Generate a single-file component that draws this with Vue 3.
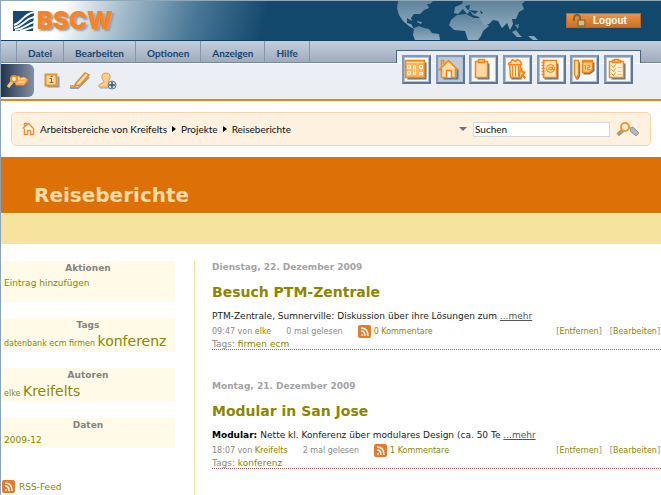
<script setup>
const menus = ['Datei', 'Bearbeiten', 'Optionen', 'Anzeigen', 'Hilfe']
const crumbs = ['Arbeitsbereiche von Kreifelts', 'Projekte', 'Reiseberichte']
const shortcuts = [
  { id: 'portal', label: 'Portal' },
  { id: 'home', label: 'Home', active: true },
  { id: 'clipboard', label: 'Zwischenablage' },
  { id: 'trash', label: 'Papierkorb' },
  { id: 'address', label: 'Adressbuch' },
  { id: 'calendar', label: 'Kalender' },
  { id: 'tasks', label: 'Aufgaben' }
]
const posts = [
  {
    date: 'Dienstag, 22. Dezember 2009',
    title: 'Besuch PTM-Zentrale',
    lead: '',
    text: 'PTM-Zentrale, Sumnerville: Diskussion über ihre Lösungen zum',
    time: '09:47',
    author: 'elke',
    reads: '0 mal gelesen',
    comments: '0 Kommentare',
    tags: ['firmen', 'ecm']
  },
  {
    date: 'Montag, 21. Dezember 2009',
    title: 'Modular in San Jose',
    lead: 'Modular:',
    text: 'Nette kl. Konferenz über modulares Design (ca. 50 Te',
    time: '18:07',
    author: 'Kreifelts',
    reads: '2 mal gelesen',
    comments: '1 Kommentare',
    tags: ['konferenz']
  }
]
</script>

<template>
  <div class="page">
    <header>
      <div class="banner">
        <a class="logo" href="#" aria-label="BSCW">
          <svg width="21" height="20" viewBox="0 0 21 20">
            <path d="M0 0H21L20 20H0Z" fill="#174a6e" />
            <path d="M1 14C9 12 9 4 21 1M1 17C11 15 11 8 21 6M2 19C12 18 13 13 21 11M7 20C14 19 15 17 21 16" fill="none" stroke="#fff" stroke-width="2" />
          </svg>
          <span>BSCW</span>
        </a>
        <svg class="map" width="150" height="39" viewBox="395 1 150 39" aria-hidden="true">
          <defs>
            <linearGradient id="land" x1="0" y1="1" x2="0" y2="0">
              <stop offset="0" stop-color="#8fabbd" />
              <stop offset="1" stop-color="#5f839c" />
            </linearGradient>
          </defs>
          <g fill="url(#land)">
            <path d="M399 1H434L431 4L428 4L430 8L425 10L421 14L415 14L412 18L413 21L408 18L408 23L412 24L415 29L410 26L404 21L400 15L398 8Z" />
            <path d="M415 28L420 26L425 28L430 29L433 33L440 34L441 40H416L414 35Z" />
            <path d="M418 21L423 22L422 24L418 22Z" />
            <path d="M452 20L458 15L467 14L475 18L482 18L490 26L484 31L482 36L479 40H469L466 31L455 30L450 25Z" />
            <path d="M455 13L456 7L463 4L464 1H526L523 4L525 9L520 12L517 19L513 19L514 24L511 30L508 23L503 28L499 21L494 20L490 24L485 25L480 17L474 15L471 11L468 14L464 9L459 14Z" />
            <path d="M513 32L517 30L520 34L523 37L518 37ZM529 36L535 36L539 40H534ZM516 25L520 24L519 29Z" />
          </g>
          <path d="M466 6L471 5L470 10L479 11L476 14L468 9ZM481 10L484 13L482 14Z" fill="#13486d" />
        </svg>
        <button class="logout" type="button">
          <svg width="16" height="13" viewBox="0 0 16 13">
            <path d="M2 7V4Q2 1 5 1T8 4V7" fill="none" stroke="#87603f" stroke-width="2" />
            <path d="M6 6H13V12H6Z" fill="#d9a14c" stroke="#6b6655" />
            <path d="M7 8H12M7 10H12" stroke="#f4cd7e" />
          </svg>
          Logout
        </button>
      </div>
      <nav class="menu">
        <button v-for="m in menus" :key="m" type="button">{{ m }}</button>
      </nav>
      <div class="toolbar">
        <div class="tools">
          <button class="tool current" type="button" aria-label="Ordner öffnen">
            <svg width="22" height="18" viewBox="0 0 22 18">
              <path d="M7 5L12 4L13 6L17 5L20 7L21 8L17 13L9 13Z" fill="#ffd9a2" stroke="#ee8a24" />
              <path d="M10 10L12 8H20L17 12H10Z" fill="#ffc880" stroke="#f49b3d" />
              <circle cx="7" cy="7" r="3" fill="#fff3dd" stroke="#f28d26" stroke-width="2" />
              <path d="M5 10L1 15" stroke="#ffc680" stroke-width="3" />
            </svg>
          </button>
          <button class="tool" type="button" aria-label="Information">
            <svg width="16" height="16" viewBox="0.5 0.5 16 16">
              <path d="M4 14H15V4" fill="none" stroke="#8b9aae" stroke-width="2" />
              <path d="M2 2H13V13H2Z" fill="#ffdca6" stroke="#e59130" stroke-width="2" />
              <path d="M6 6H8V10M6 10H10M7 4H9" fill="none" stroke="#9c5c12" />
            </svg>
          </button>
          <button class="tool" type="button" aria-label="Bearbeiten">
            <svg width="22" height="18" viewBox="0 0 22 18">
              <path d="M1 16H9L20 5" fill="none" stroke="#92a0b2" stroke-width="2" />
              <path d="M7 11L16 1L20 3L11 13L6 14Z" fill="#ffd295" stroke="#e78a24" stroke-width="1.500" />
              <path d="M9 12L18 2" stroke="#fff2da" />
              <path d="M1 14H5L7 12" fill="none" stroke="#e78a24" stroke-width="1.500" />
            </svg>
          </button>
          <button class="tool" type="button" aria-label="Mitglied einladen">
            <svg width="20" height="18" viewBox="0 0 20 18">
              <path d="M6 10Q3 6 4 3Q5 1 8 1T12 3Q13 6 10 10L13 12V15H1V13Z" fill="#ffcd8c" stroke="#ea9a47" />
              <path d="M2 16H12" stroke="#9aa6b6" />
              <circle cx="14" cy="13" r="4" fill="#d8e2ec" stroke="#5d7893" />
              <path d="M11 13H17M14 10V16" stroke="#2e5576" stroke-width="1.500" />
            </svg>
          </button>
        </div>
        <div class="shortcuts">
          <button v-for="s in shortcuts" :key="s.id" type="button" :aria-label="s.label" :class="{ active: s.active }">
            <svg width="23" height="23" viewBox="0.5 0.5 23 23" fill="none" stroke="#f5860f" stroke-width="1.500">
              <template v-if="s.id === 'portal'">
                <path d="M4 21H22V5" stroke="#5f7694" stroke-width="2" />
                <path d="M2 3H21V20H2Z" fill="#ffb557" />
                <path d="M3 5H20" stroke="#ffe0b0" stroke-width="1" />
                <path d="M4 8H7V11H4ZM4 14H7V17H4ZM10 8H12V17H10ZM16 8H19V11H16ZM16 15H19V17H16Z" fill="#ffc477" stroke="#fff5e6" stroke-width="1" />
              </template>
              <template v-else-if="s.id === 'home'">
                <path d="M6 21H20V12" stroke="#5f7694" stroke-width="2" />
                <path d="M2 12L11 3L20 12H18V20H14V13H9V20H4V12Z" fill="#ffdba6" />
                <path d="M4 9V3H6V7" fill="#ffdba6" />
                <path d="M10 14H13V20H10Z" fill="#f4f6fa" stroke="none" />
              </template>
              <template v-else-if="s.id === 'clipboard'">
                <path d="M7 21H18V6" stroke="#5f7694" stroke-width="2" />
                <path d="M5 4H17V20H5Z" fill="#ffd9a5" />
                <path d="M8 5V2H14V5Z" fill="#ffc477" />
              </template>
              <template v-else-if="s.id === 'trash'">
                <path d="M7 21H17" stroke="#5f7694" stroke-width="2" />
                <path d="M5 7H16L15 20H6Z" fill="#ffe2ba" />
                <path d="M8 8V19M11 8V19M14 8V19" stroke-width="1" />
                <path d="M4 7Q4 5 6 5L8 2L11 4L13 2L16 4L17 7Z" fill="#ffe7c5" />
                <path d="M17 10V14L20 15L18 18L21 21M18 17L16 21" stroke-width="2" />
              </template>
              <template v-else-if="s.id === 'address'">
                <path d="M6 21H19V6" stroke="#5f7694" stroke-width="2" />
                <path d="M5 3H18V20H5Z" fill="#ffe6c3" />
                <path d="M3 5H6M3 8H6M3 11H6M3 14H6M3 17H6" />
                <circle cx="12" cy="11" r="4" fill="#ffd397" stroke-width="1" />
                <circle cx="12" cy="11" r="1.500" stroke-width="1" />
                <path d="M14 9V12H16" stroke-width="1" />
              </template>
              <template v-else-if="s.id === 'calendar'">
                <path d="M12 16H18L22 13V5" stroke="#5f7694" stroke-width="2" />
                <path d="M8 5V18L6 22" stroke="#5f7694" />
                <path d="M3 3H7V17L5 21L3 17Z" fill="#ffe3b9" />
                <path d="M11 3H21V12L18 15H11Z" fill="#ffc87f" />
                <path d="M11 4H21" stroke-width="2" />
                <path d="M13 8H14V12M16 8H18V10H16V12H19" stroke-width="1" />
              </template>
              <template v-else>
                <path d="M6 21H19V6" stroke="#5f7694" stroke-width="2" />
                <path d="M4 4H18V20H4Z" fill="#fff0d9" />
                <path d="M7 5V3H9V2H13V3H15V5Z" fill="#ffc477" />
                <path d="M6 8L8 10L10 7M6 12L8 14L10 11M6 16L8 18L10 15" stroke-width="1" />
                <path d="M12 10H16M12 14H16M12 17H16" stroke="#ffc477" stroke-width="1" />
              </template>
            </svg>
          </button>
        </div>
      </div>
    </header>

    <div class="path">
      <svg width="13" height="14" viewBox="0.5 0.5 13 14">
        <path d="M1 7L7 2L12 7V13H9V9H6V13H3V7M3 6V2H5V4" fill="#fff" stroke="#f3902c" stroke-width="1.500" />
      </svg>
      <nav class="crumbs">
        <template v-for="(c, i) in crumbs" :key="c">
          <i v-if="i" class="arrow"></i>
          <a href="#">{{ c }}</a>
        </template>
      </nav>
      <form class="search" @submit.prevent>
        <button type="button" aria-label="Suchoptionen"><i class="down"></i></button>
        <input type="text" value="Suchen" aria-label="Suchen" />
        <button type="submit" aria-label="Suche starten">
          <svg width="24" height="15" viewBox="0 0 24 15">
            <path d="M8 8L2 13" stroke="#93a0ae" stroke-width="3" />
            <path d="M7 7L1 12" stroke="#e58b2a" stroke-width="2" />
            <circle cx="9" cy="5" r="4" fill="#fff3df" stroke="#f3952f" stroke-width="2" />
            <path d="M14 6L17 5L23 11L20 14L15 10Z" fill="#b5b7b5" stroke="#8e9aa5" />
            <path d="M17 8L20 11" stroke="#e3b982" />
          </svg>
        </button>
      </form>
    </div>

    <div class="title"><h1>Reiseberichte</h1></div>
    <div class="stripe"></div>

    <div class="body">
      <aside>
        <section class="tall">
          <h2>Aktionen</h2>
          <p><a href="#">Eintrag hinzufügen</a></p>
        </section>
        <section>
          <h2>Tags</h2>
          <p class="cloud"><a href="#">datenbank</a> <a href="#">ecm</a> <a href="#">firmen</a> <a class="big" href="#">konferenz</a></p>
        </section>
        <section>
          <h2>Autoren</h2>
          <p class="cloud"><a href="#">elke</a> <a class="big" href="#">Kreifelts</a></p>
        </section>
        <section>
          <h2>Daten</h2>
          <p><a href="#">2009-12</a></p>
        </section>
        <a class="feed" href="#">
          <svg width="13" height="13" viewBox="0 0 13 13">
            <rect width="13" height="13" rx="2" fill="#e8792a" />
            <circle cx="4" cy="10" r="1" fill="#fff" />
            <path d="M3 6Q7 6 7 11M3 3Q10 3 10 11" fill="none" stroke="#fff" stroke-width="1.500" />
          </svg>
          RSS-Feed
        </a>
      </aside>
      <main>
        <article v-for="p in posts" :key="p.title">
          <div class="date">{{ p.date }}</div>
          <h3><a href="#">{{ p.title }}</a></h3>
          <p class="text"><b v-if="p.lead">{{ p.lead }}&nbsp;</b>{{ p.text }} <a href="#">...mehr</a></p>
          <div class="meta">
            <span>{{ p.time }} von <a href="#">{{ p.author }}</a></span>
            <span>{{ p.reads }}</span>
            <a class="comments" href="#">
              <svg width="13" height="13" viewBox="0 0 13 13">
                <rect width="13" height="13" rx="2" fill="#e8792a" />
                <circle cx="4" cy="10" r="1" fill="#fff" />
                <path d="M3 6Q7 6 7 11M3 3Q10 3 10 11" fill="none" stroke="#fff" stroke-width="1.500" />
              </svg>
              {{ p.comments }}
            </a>
            <span class="actions">
              <span>[<a href="#">Entfernen</a>]</span>
              <span>[<a href="#">Bearbeiten</a>]</span>
            </span>
          </div>
          <div class="tags">Tags: <template v-for="t in p.tags" :key="t"><a href="#">{{ t }}</a>{{ ' ' }}</template></div>
        </article>
      </main>
    </div>
  </div>
</template>

<style>
body {
  background: #fff;
}
</style>

<style scoped>
.page {
  min-height: 100vh;
  box-sizing: border-box;
  border-left: 1px solid #8ba3ba;
  font-family: "DejaVu Sans", sans-serif;
  font-size: 9px;
  color: #8a8a8a;
  display: flex;
  flex-direction: column;
}
button {
  border: 0;
  padding: 0;
  margin: 0;
  background: none;
  font: inherit;
  color: inherit;
}
svg {
  display: block;
  flex: none;
}
a {
  color: #8c8600;
  text-decoration: none;
}
h1, h2, h3, p {
  margin: 0;
}
.banner {
  display: flex;
  align-items: stretch;
  height: 39px;
  border-top: 1px solid #8fa9bb;
  border-bottom: 1px solid #0f3f61;
  background: linear-gradient(105deg, #fff 0, #fff 60px, #a5bccb 120px, #4a7897 190px, #13486d 260px);
}
.logo {
  flex: 1;
  display: flex;
  align-items: center;
  gap: 3px;
  padding-left: 12px;
}
.logo span {
  font: 900 24px/24px Inter, sans-serif;
  color: #f78322;
  text-shadow: 2px 2px 2px #8aa0b0;
}
.logout {
  align-self: center;
  display: flex;
  align-items: center;
  gap: 5px;
  width: 75px;
  height: 15px;
  padding-left: 5px;
  margin: 0 20px 0 22px;
  background: linear-gradient(#e8944a, #cf6f22);
  border: 1px solid #b9672a;
  box-sizing: border-box;
  color: #fff;
  font: bold 10px "Liberation Sans", sans-serif;
}
.menu {
  display: flex;
  height: 21px;
  padding-left: 15px;
  background: linear-gradient(#c5cfdd, #9fabbc);
  border-bottom: 1px solid #74889f;
}
.menu button {
  padding: 2px 11px 0;
  border-left: 1px solid #8797ab;
  font: bold 10px Lato, sans-serif;
  color: #17466b;
}
.menu button:last-child {
  border-right: 1px solid #8797ab;
}
.toolbar {
  display: flex;
  justify-content: space-between;
  align-items: flex-start;
  height: 35px;
  background: #ebeff4;
  border-top: 1px solid #fff;
  border-bottom: 2px solid #e9850f;
}
.tools {
  display: flex;
  align-items: center;
  gap: 8px;
}
.tool {
  display: flex;
  justify-content: center;
  width: 20px;
}
.tool.current {
  width: 33px;
  height: 33px;
  align-items: center;
  border-radius: 0 6px 6px 0;
  background: linear-gradient(90deg, #22344a, #53647b 50%, #8490a2);
}
.shortcuts {
  display: flex;
  justify-content: space-between;
  align-items: flex-start;
  width: 231px;
  height: 8px;
  margin: -14px 20px 0 0;
  padding: 4px 7px 0 5px;
  border: solid #466583;
  border-width: 1px 1px 0;
  background: #ebeff4;
}
.shortcuts button {
  width: 29px;
  height: 29px;
  border: 2px solid #5d7797;
  border-top-color: #8398b2;
  border-left-color: #8398b2;
  background: #f6f8fb;
  box-shadow: inset 0 0 0 1px #b4c1d2;
}
.shortcuts .active {
  background: #bccadb;
}
.path {
  display: flex;
  align-items: center;
  height: 32px;
  margin: 11px 10px;
  padding: 0 10px;
  border: 1px solid #fbd3ab;
  border-radius: 5px;
  background: #fff1e0;
}
.crumbs {
  display: flex;
  align-items: center;
  flex: 1;
  margin-left: 5px;
  font: 10px Lato, sans-serif;
}
.crumbs a {
  color: #111;
}
.arrow {
  margin: 0 5px;
  border: solid transparent;
  border-width: 3px 0 3px 4px;
  border-left-color: #000;
}
.search {
  display: flex;
  align-items: center;
  gap: 6px;
}
.down {
  display: block;
  border: solid transparent;
  border-width: 4px 4px 0;
  border-top-color: #6d7378;
}
.search input {
  width: 137px;
  height: 15px;
  box-sizing: border-box;
  padding: 0 1px;
  border: 1px solid #d3d6da;
  background: #fff;
  color: #111;
  font: 10px Lato, sans-serif;
}
.title {
  height: 56px;
  padding-left: 33px;
  background: #de7008;
  border-bottom: 1px solid #fff;
}
.title h1 {
  padding-top: 26px;
  font-size: 20px;
  line-height: 24px;
  color: #fbdca4;
}
.stripe {
  height: 30px;
  background: #f6e39e;
}
.body {
  flex: 1;
  display: flex;
  padding-top: 17px;
}
aside {
  width: 174px;
  margin-right: 19px;
}
aside section {
  margin-bottom: 16px;
  padding: 0 3px;
  background: #fffbe8;
}
aside .tall {
  padding-bottom: 11px;
}
aside h2 {
  font-size: 9px;
  line-height: 15px;
  text-align: center;
  color: #838383;
}
aside p {
  line-height: 15px;
}
aside .cloud {
  font-size: 8px;
  line-height: 16px;
}
.cloud .big {
  font-size: 14px;
}
.feed {
  display: flex;
  align-items: center;
  gap: 4px;
  margin: 32px 0 0 1px;
}
main {
  flex: 1;
  padding-left: 17px;
  border-left: 1px solid #f5e08f;
}
article {
  margin-bottom: 30px;
}
.date {
  font-weight: bold;
  line-height: 12px;
  color: #a3a3a3;
}
h3 {
  margin-top: 9px;
  font-size: 14px;
  line-height: 20px;
}
.text {
  margin-top: 7px;
  line-height: 14px;
  color: #222;
}
.text b {
  color: #000;
}
.text a {
  color: #555;
  text-decoration: underline;
}
.meta {
  display: flex;
  align-items: center;
  gap: 15px;
  height: 16px;
  font-size: 8px;
}
.comments {
  display: flex;
  align-items: center;
  gap: 3px;
}
.actions {
  display: flex;
  gap: 8px;
  margin-left: auto;
  padding-right: 1px;
}
.tags {
  line-height: 10px;
  border-bottom: 1px dotted #b55;
}
</style>
